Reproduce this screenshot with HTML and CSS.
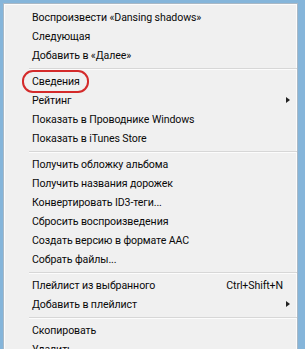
FILE: index.html
```html
<!DOCTYPE html>
<html lang="ru">
<head>
    <meta charset="UTF-8">
    <title>Контекстное меню</title>
    <link rel="stylesheet" href="styles.css">
</head>
<body>
    <div class="menu">
        <div class="item">Воспроизвести «Dansing shadows»</div>
        <div class="item">Следующая</div>
        <div class="item">Добавить в «Далее»</div>
        <div class="separator"></div>
        <div class="item"><span class="marked">Сведения</span></div>
        <div class="item submenu">Рейтинг</div>
        <div class="item">Показать в Проводнике Windows</div>
        <div class="item">Показать в iTunes Store</div>
        <div class="separator"></div>
        <div class="item">Получить обложку альбома</div>
        <div class="item">Получить названия дорожек</div>
        <div class="item">Конвертировать ID3-теги...</div>
        <div class="item">Сбросить воспроизведения</div>
        <div class="item">Создать версию в формате AAC</div>
        <div class="item">Собрать файлы...</div>
        <div class="separator"></div>
        <div class="item">Плейлист из выбранного<span class="shortcut">Ctrl+Shift+N</span></div>
        <div class="item submenu">Добавить в плейлист</div>
        <div class="separator"></div>
        <div class="item">Скопировать</div>
        <div class="item">Удалить</div>
    </div>
</body>
</html>
```

FILE: styles.css
```css
body, html {
    margin: 0;
    padding: 0;
    height: 100%;
    background-color: #85b5da;
    font-family: Roboto, 'Noto Sans', sans-serif;
    overflow: hidden;
}

.menu {
    margin: 3px 0 0 3px;
    width: 293px;
    height: 400px;
    background-color: #f0f0f0;
    border: 1px solid #a9b8c5;
    box-shadow: inset 1px 1px 0 #fcfcfc, inset -1px 0 0 #fcfcfc;
    padding-top: 4px;
    box-sizing: content-box;
}

.item {
    position: relative;
    height: 19px;
    line-height: 19px;
    padding-left: 28px;
    padding-right: 14px;
    font-size: 10.6px;
    letter-spacing: -0.1px;
    color: #0a0a0a;
    white-space: nowrap;
    display: flex;
}

.shortcut {
    margin-left: auto;
}

.submenu::after {
    content: "";
    position: absolute;
    right: 7px;
    top: 6px;
    border-left: 4px solid #222;
    border-top: 3.5px solid transparent;
    border-bottom: 3.5px solid transparent;
}

.separator {
    height: 1px;
    margin: 3px 0 2px 25px;
    background-color: #d7d7d7;
    border-bottom: 1px solid #fcfcfc;
}

.marked {
    position: relative;
    display: inline-block;
    height: 19px;
}

/* красная обводка вокруг пункта */
.marked::before {
    content: "";
    position: absolute;
    left: -10px;
    right: -9px;
    top: -2px;
    bottom: -2px;
    border: 2px solid #d42a2a;
    border-radius: 11px;
}
```
